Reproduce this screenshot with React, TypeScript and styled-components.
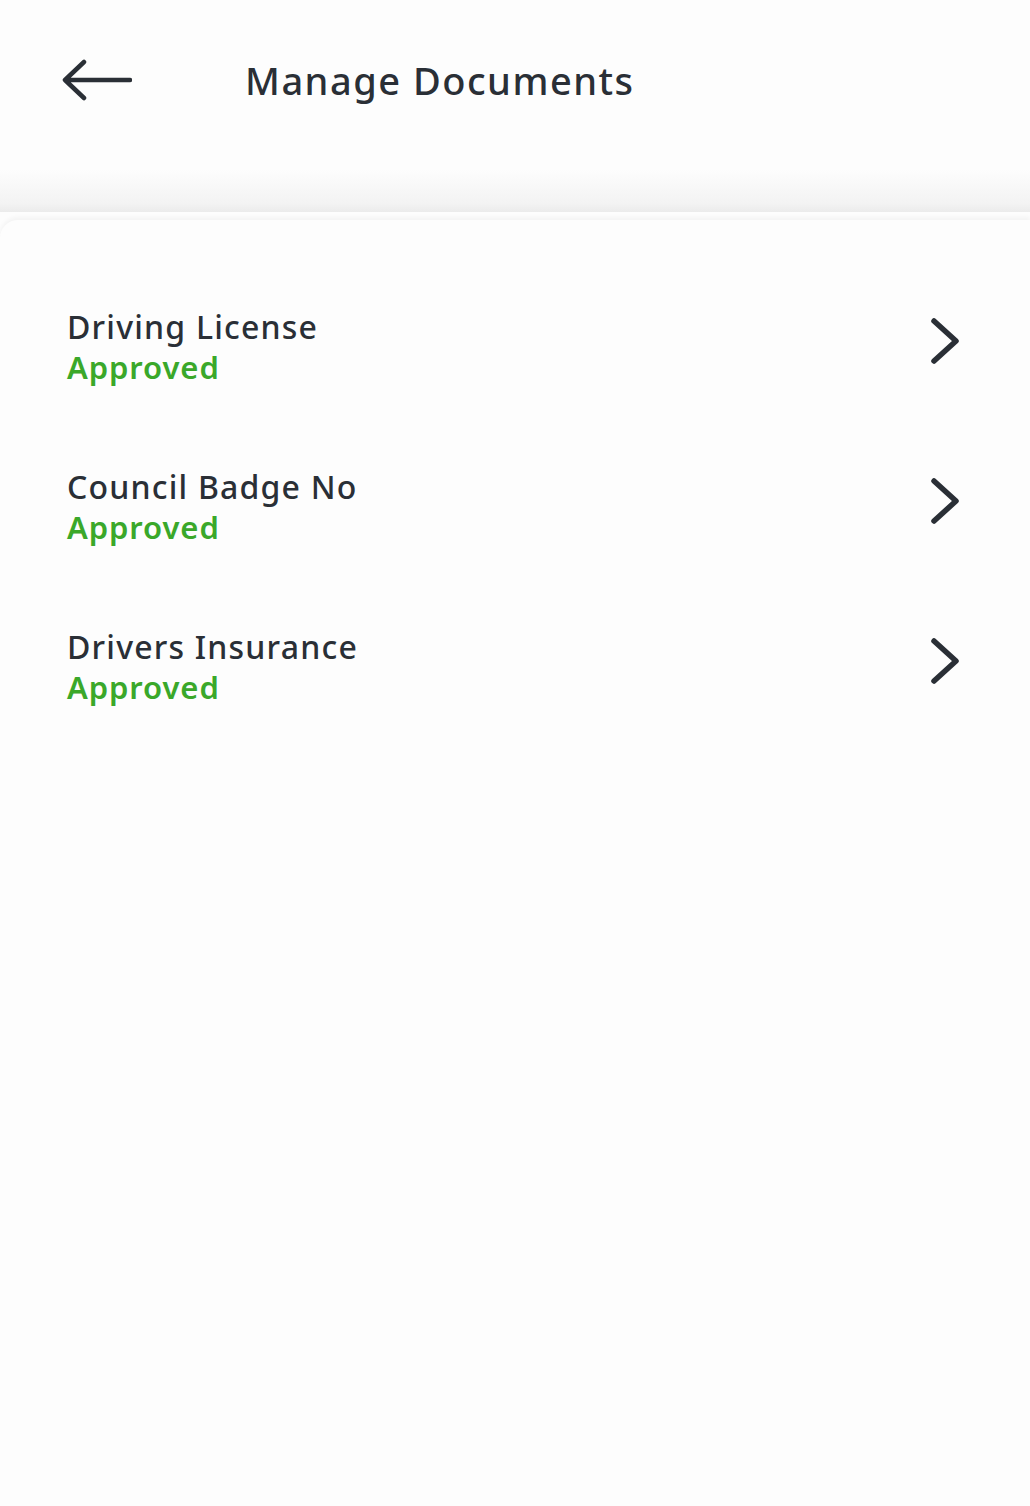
import React from "react";
import styled, { createGlobalStyle } from "styled-components";

const Global = createGlobalStyle`
  html, body { margin: 0; padding: 0; background: #fdfdfd; }
  body { font-family: "Noto Sans", "Open Sans", sans-serif; }
`;

const Page = styled.div`
  width: 1030px;
  height: 1506px;
  background: #fdfdfd;
  display: flex;
  flex-direction: column;
  overflow: hidden;
`;

const Header = styled.header`
  height: 212px;
  flex-shrink: 0;
  background: linear-gradient(to bottom, #fdfdfd 0%, #fdfdfd 80%, #f3f3f3 96%, #ebebeb 100%);
  display: flex;
  align-items: flex-start;
  padding: 52px 0 0 60px;
  box-sizing: border-box;
  gap: 109px;
`;

const BackButton = styled.button`
  border: none;
  background: none;
  padding: 0;
  width: 76px;
  height: 56px;
  display: flex;
  align-items: center;
  cursor: pointer;
`;

const Title = styled.h1`
  margin: 0;
  font-size: 38px;
  font-weight: 500;
  color: #2a2f36;
  line-height: 56px;
  letter-spacing: 1.5px;
`;

const Card = styled.main`
  flex: 1;
  margin-top: 8px;
  background: #fdfdfd;
  border-top-left-radius: 18px;
  box-shadow: 0 -3px 4px rgba(0, 0, 0, 0.04);
  padding: 87px 66px 0 67px;
  display: flex;
  flex-direction: column;
  gap: 80px;
`;

const Row = styled.div`
  display: flex;
  align-items: center;
  justify-content: space-between;
`;

const Texts = styled.div`
  display: flex;
  flex-direction: column;
`;

const Name = styled.div`
  font-size: 32px;
  font-weight: 500;
  color: #2a2f36;
  line-height: 40px;
  letter-spacing: 1.2px;
`;

const Status = styled.div`
  font-size: 31px;
  font-weight: 600;
  color: #3aa82a;
  line-height: 40px;
  letter-spacing: 0.9px;
`;

const ChevronBox = styled.div`
  display: flex;
  margin-bottom: 12px;
`;

const Chevron = () => (
  <ChevronBox>
    <svg width="38" height="48" viewBox="0 0 38 48" fill="none">
      <path d="M8 4 L30 24 L8 44" stroke="#2a2f36" strokeWidth="5.5" strokeLinecap="round" strokeLinejoin="round" />
    </svg>
  </ChevronBox>
);

const docs = ["Driving License", "Council Badge No", "Drivers Insurance"];

export default function App() {
  return (
    <Page>
      <Global />
      <Header>
        <BackButton aria-label="Back">
          <svg width="72" height="44" viewBox="0 0 72 44" fill="none">
            <path d="M70 22 H6 M24 4 L5 22 L24 40" stroke="#2a2f36" strokeWidth="4.5" strokeLinecap="round" strokeLinejoin="round" />
          </svg>
        </BackButton>
        <Title>Manage Documents</Title>
      </Header>
      <Card>
        {docs.map((d) => (
          <Row key={d}>
            <Texts>
              <Name>{d}</Name>
              <Status>Approved</Status>
            </Texts>
            <Chevron />
          </Row>
        ))}
      </Card>
    </Page>
  );
}
